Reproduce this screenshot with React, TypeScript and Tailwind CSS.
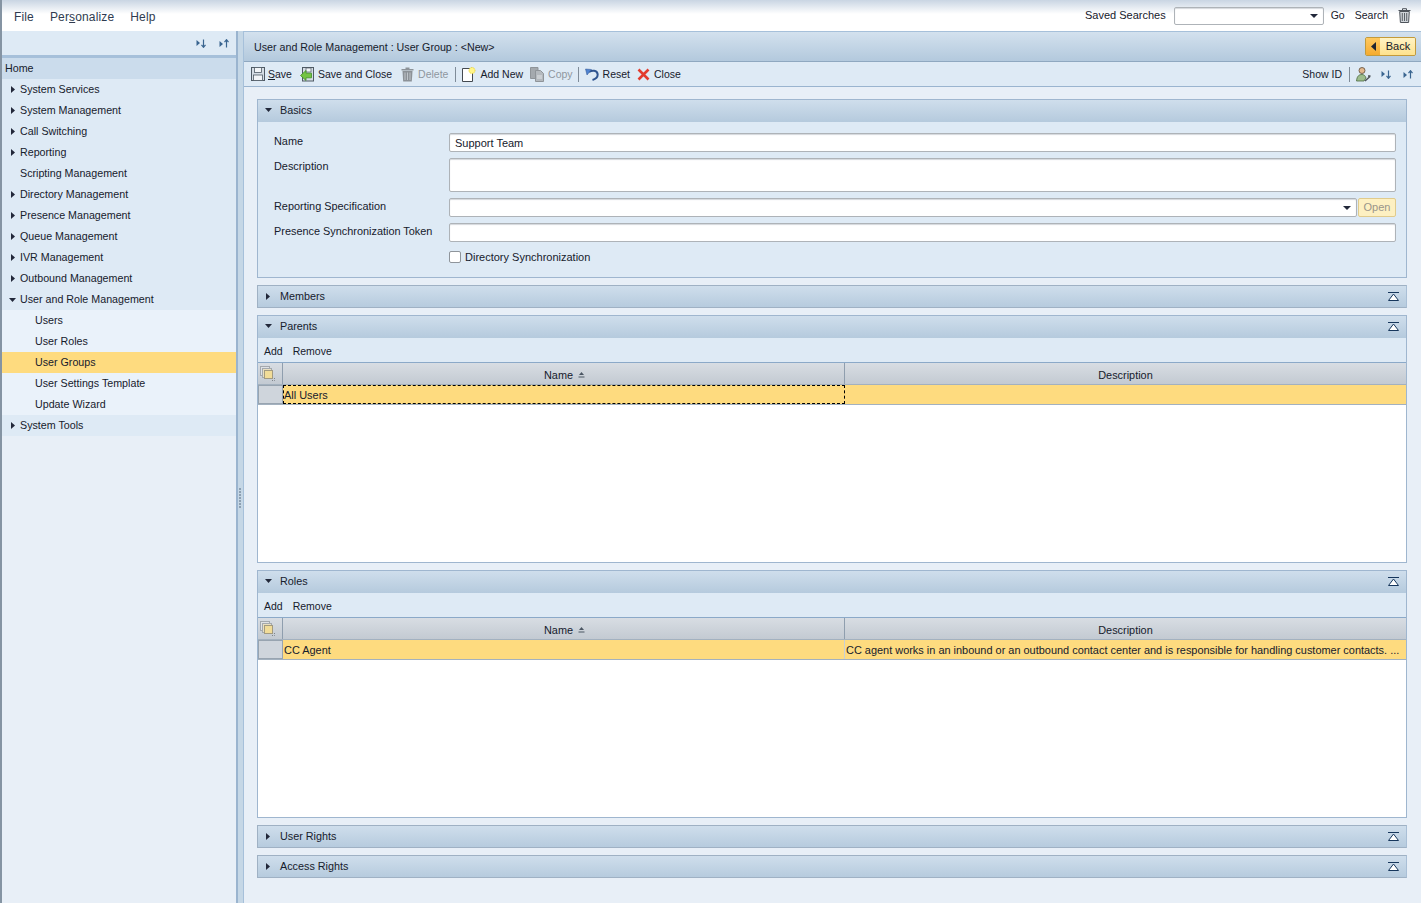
import React from 'react';

const navItems = [
  'System Services',
  'System Management',
  'Call Switching',
  'Reporting',
  'Scripting Management',
  'Directory Management',
  'Presence Management',
  'Queue Management',
  'IVR Management',
  'Outbound Management',
];
const childItems = ['Users', 'User Roles', 'User Groups', 'User Settings Template', 'Update Wizard'];

const ArrowRight = ({ className = '' }: { className?: string }) => (
  <svg width="4" height="7" viewBox="0 0 4 7" className={className}>
    <path d="M0 0 L4 3.5 L0 7 Z" fill="#22283a" />
  </svg>
);

const ArrowDown = ({ className = '', w = 7 }: { className?: string; w?: number }) => (
  <svg width={w} height="4" viewBox="0 0 7 4" preserveAspectRatio="none" className={className}>
    <path d="M0 0 H7 L3.5 4 Z" fill="#22283a" />
  </svg>
);

const ExpandIcon = () => (
  <svg width="10" height="9" viewBox="0 0 10 9">
    <path d="M0.5 1 L4 4 L0.5 7 Z" fill="#3a6590" />
    <path d="M7.5 0.5 V8 M5.5 5.8 L7.5 8.3 L9.5 5.8" stroke="#3a6590" strokeWidth="1.2" fill="none" />
  </svg>
);

const CollapseIcon = () => (
  <svg width="10" height="9" viewBox="0 0 10 9">
    <path d="M0.5 2 L4 5 L0.5 8 Z" fill="#3a6590" />
    <path d="M7.5 8.5 V1 M5.5 3.2 L7.5 0.7 L9.5 3.2" stroke="#3a6590" strokeWidth="1.2" fill="none" />
  </svg>
);

const TrashIcon = () => (
  <svg width="13" height="15" viewBox="0 0 13 15">
    <path d="M0.5 2 H12.5 V3.6 H0.5 Z M4.5 0.5 H8.5 V2 H4.5 Z" fill="#8c9298" />
    <path d="M1.5 4 H11.5 L10.8 14.5 H2.2 Z" fill="#8c9298" />
    <path d="M4 5.5 V13 M6.5 5.5 V13 M9 5.5 V13" stroke="#c5cbd0" strokeWidth="0.9" />
  </svg>
);

const TrashOutlineIcon = () => (
  <svg width="13" height="15" viewBox="0 0 13 15">
    <path d="M0.5 2.5 H12.5 M4.5 2.5 V0.7 H8.5 V2.5" stroke="#4d535a" fill="none" />
    <path d="M1.7 3.5 H11.3 L10.6 14.5 H2.4 Z" fill="#cfd4d9" stroke="#4d535a" />
    <path d="M4.3 5 V13 M6.5 5 V13 M8.7 5 V13" stroke="#4d535a" strokeWidth="0.9" />
  </svg>
);

const SaveIcon = () => (
  <svg width="14" height="14" viewBox="0 0 14 14">
    <rect x="0.5" y="0.5" width="13" height="13" fill="#d5dde5" stroke="#4f5a65" />
    <rect x="3.5" y="0.5" width="7" height="5" fill="#f2f5f8" stroke="#4f5a65" strokeWidth="0.8" />
    <rect x="2.5" y="8" width="9" height="5.5" fill="#f2f5f8" stroke="#4f5a65" strokeWidth="0.8" />
  </svg>
);

const SaveCloseIcon = () => (
  <svg width="14" height="15" viewBox="0 0 14 15">
    <rect x="2.5" y="0.5" width="11" height="13.5" fill="#d5dde5" stroke="#4f5a65" />
    <rect x="6" y="1" width="5" height="4" fill="#f2f5f8" stroke="#4f5a65" strokeWidth="0.7" />
    <path d="M0.5 8.5 L6 3.5 V6.2 H11.5 V10.8 H6 V13.5 Z" fill="#74c442" stroke="#3f8f24" strokeWidth="0.8" />
  </svg>
);

const AddNewIcon = () => (
  <svg width="14" height="15" viewBox="0 0 14 15">
    <path d="M0.5 1.5 H8 M0.5 1.5 V14.5 H10.5 V6" fill="#ffffff" stroke="#444a51" />
    <path d="M1 2 H9 V6 H10 V14 H1 Z" fill="#ffffff" />
    <circle cx="10" cy="3.5" r="3" fill="#fff58a" stroke="#e4c81e" strokeWidth="0.9" strokeDasharray="1 0.8" />
  </svg>
);

const CopyIcon = () => (
  <svg width="14" height="15" viewBox="0 0 14 15">
    <path d="M0.5 0.5 H8 V11.5 H0.5 Z" fill="#a4a9ae" stroke="#8f9499" />
    <path d="M5.5 3.5 H10.5 L13.5 6.5 V14.5 H5.5 Z" fill="#b4b9be" stroke="#8f9499" />
    <path d="M7 9 H12 M7 11 H12" stroke="#eceef0" strokeWidth="0.8" />
  </svg>
);

const ResetIcon = () => (
  <svg width="14" height="13" viewBox="0 0 14 13">
    <path d="M4 4 C7 2 12 2 12.6 6 C13 9 11 11 7.5 12" stroke="#2f548f" strokeWidth="2" fill="none" />
    <path d="M0.5 1 L6.5 1.5 L2 7 Z" fill="#4f83d1" stroke="#2e528f" strokeWidth="0.5" />
  </svg>
);

const CloseIcon = () => (
  <svg width="13" height="13" viewBox="0 0 13 13">
    <path d="M1.5 1.5 L11.5 11.5 M11.5 1.5 L1.5 11.5" stroke="#e23b2e" strokeWidth="2.6" />
  </svg>
);

const UserToolIcon = () => (
  <svg width="15" height="15" viewBox="0 0 15 15">
    <circle cx="6" cy="3.5" r="3" fill="#e3b98f" stroke="#5e4a36" strokeWidth="0.8" />
    <path d="M0.5 14 C1 9 3 7.5 6 7.5 C8 7.5 9.5 9 10 11 L8 14 Z" fill="#9dbd8e" stroke="#4b6b40" strokeWidth="0.8" />
    <path d="M9 14 L14 9.5 M12 9 L14.5 9" stroke="#4d535a" strokeWidth="1.4" />
  </svg>
);

const PanelCollapse = () => (
  <svg width="11" height="9" viewBox="0 0 11 9">
    <path d="M0 0.5 H11" stroke="#16365c" />
    <path d="M5.5 2 L10.5 8.5 H0.5 Z" fill="#ffffff" stroke="#16365c" />
  </svg>
);

const GridCornerIcon = () => (
  <svg width="15" height="15" viewBox="0 0 15 15">
    <rect x="0.5" y="0.5" width="9" height="9" fill="#dfe2e6" stroke="#a4a9ae" />
    <rect x="2.5" y="2.5" width="9" height="9" fill="#e9dfc0" stroke="#a4a9ae" />
    <rect x="4.5" y="4.5" width="8" height="8" fill="#f1dc98" stroke="#a29a80" />
    <path d="M12 14.5 H14.5 V12" stroke="#7f858b" strokeDasharray="1 1" fill="none" />
  </svg>
);

const ToolButton = ({
  icon,
  label,
  disabled,
  tight,
  className = '',
}: {
  icon: React.ReactNode;
  label: React.ReactNode;
  disabled?: boolean;
  tight?: boolean;
  className?: string;
}) => (
  <div className={`flex items-center ${disabled ? 'text-[#8f979f]' : 'text-[#16202c]'} ${className}`}>
    {icon}
    <span className={tight ? 'ml-[3px]' : 'ml-[4px]'}>{label}</span>
  </div>
);

const Divider = ({ className = '' }: { className?: string }) => <div className={`w-px h-[15px] bg-[#7f8c99] ${className}`} />;

const SectionHeader = ({ title, open, collapse = true }: { title: string; open?: boolean; collapse?: boolean }) => (
  <div className="h-[22px] shrink-0 flex items-center pl-[7px] pr-[7px] pb-[2px] bg-gradient-to-b from-[#cfdeec] to-[#b5cadd] text-[10.8px] text-[#16202c]">
    <div className="w-[15px] flex items-center justify-start">{open ? <ArrowDown /> : <ArrowRight className="ml-px" />}</div>
    <span>{title}</span>
    {collapse && (
      <div className="ml-auto flex">
        <PanelCollapse />
      </div>
    )}
  </div>
);

const Collapsed = ({ title }: { title: string }) => (
  <div className="border border-[#9fb1c4] border-r-[#a9bfd6] h-[23px] shrink-0 overflow-hidden">
    <SectionHeader title={title} />
  </div>
);

const GridPanel = ({ title, rowName, rowDesc, focused }: { title: string; rowName: string; rowDesc: string; focused?: boolean }) => (
  <div className="border border-[#9fb6cf] h-[248px] shrink-0 flex flex-col bg-white">
    <SectionHeader title={title} open />
    <div className="h-[25px] shrink-0 bg-[#deeaf5] flex items-center gap-[10px] pl-[6px] pt-[2px] border-b border-[#8ba9c8] text-[10.5px] text-[#16202c]">
      <span>Add</span>
      <span>Remove</span>
    </div>
    <div className="h-[22px] shrink-0 flex bg-gradient-to-b from-[#d8dde3] to-[#c3cad2] border-b border-[#a3b1bf] text-[10.9px] text-[#16202c]">
      <div className="w-[25px] shrink-0 border-r border-[#8f9eae] flex items-center pl-[2px]">
        <GridCornerIcon />
      </div>
      <div className="w-[562px] shrink-0 border-r border-[#8f9eae] flex items-center justify-center gap-[5px] pt-[3px] pl-[2px]">
        <span>Name</span>
        <svg width="7" height="6" viewBox="0 0 7 6">
          <path d="M3.5 0 L6 3 H1 Z" fill="#4b5663" />
          <path d="M0.5 5 H6.5" stroke="#4b5663" />
        </svg>
      </div>
      <div className="flex-1 flex items-center justify-center pt-[3px]">Description</div>
    </div>
    <div className="h-[20px] shrink-0 flex bg-[#fedb7f] border-b border-[#a3b1bf] text-[10.95px] text-[#16202c]">
      <div className="w-[25px] shrink-0 bg-[#cfd5dc] border border-[#98a4b0]" />
      <div className={`w-[562px] shrink-0 flex items-center pt-px ${focused ? 'border border-dashed border-black' : 'pl-px border-r border-[#c9cfd6]'}`}>
        {rowName}
      </div>
      <div className="flex-1 min-w-0 flex items-center pl-px pt-px whitespace-nowrap overflow-hidden">{rowDesc}</div>
    </div>
    <div className="flex-1 bg-white" />
  </div>
);

const FormLabel = ({ children, className = '' }: { children: React.ReactNode; className?: string }) => (
  <div className={`w-[175px] shrink-0 text-[10.9px] text-[#16202c] ${className}`}>{children}</div>
);

const inputClass = 'border border-[#aeb3b8] rounded-[2px] bg-white shadow-[inset_0_1px_1px_#d4d8dc]';

export default function App() {
  return (
    <div className="w-[1421px] h-[903px] overflow-hidden flex flex-col border-l-2 border-[#8594a3] bg-[#e8eff7] text-[11px] leading-[13px] text-[#16202c] font-['Liberation_Sans',Arial,sans-serif]">
      {/* top menu */}
      <div className="h-[31px] shrink-0 flex items-center pl-[12px] pr-[10px] bg-gradient-to-b from-[#c9d5e3] to-[#ffffff] bg-[length:100%_14px] bg-no-repeat bg-white">
        <div className="flex gap-[16px] text-[12px] tracking-[0.15px] text-[#2f3b50] pt-[3px]">
          <span>File</span>
          <span>
            Per<span className="underline">s</span>onalize
          </span>
          <span>Help</span>
        </div>
        <div className="ml-auto flex items-center">
          <span className="mr-[8px]">Saved Searches</span>
          <div className={`w-[150px] h-[18px] flex items-center justify-end pr-[5px] mr-[7px] ${inputClass}`}>
            <ArrowDown w={8} />
          </div>
          <span className="mr-[10px] text-[10.5px]">Go</span>
          <span className="mr-[10px] text-[10.5px]">Search</span>
          <TrashOutlineIcon />
        </div>
      </div>

      <div className="flex-1 flex min-h-0">
        {/* sidebar */}
        <div className="w-[236px] shrink-0 flex flex-col bg-[#e8eff7] border-r-2 border-[#9ab4cf] text-[10.7px]">
          <div className="h-[24px] shrink-0 flex items-center justify-end gap-[13px] pr-[7px] bg-[#deeaf5]">
            <ExpandIcon />
            <CollapseIcon />
          </div>
          <div className="h-[3px] shrink-0 bg-[#a6c0da]" />
          <div className="h-[21px] shrink-0 flex items-center pl-[3px] bg-[#cbdcec]">Home</div>
          {navItems.map((item, i) => (
            <div key={item} className="h-[21px] shrink-0 flex items-center bg-[#deeaf5]">
              <div className="w-[18px] flex justify-end pr-[5px]">{i !== 4 && <ArrowRight />}</div>
              <span>{item}</span>
            </div>
          ))}
          <div className="h-[21px] shrink-0 flex items-center bg-[#deeaf5]">
            <div className="w-[18px] flex justify-end pr-[4px]">
              <ArrowDown />
            </div>
            <span>User and Role Management</span>
          </div>
          {childItems.map((item) => (
            <div key={item} className={`h-[21px] shrink-0 flex items-center pl-[33px] ${item === 'User Groups' ? 'bg-[#fedb7f]' : 'bg-[#eaf2fa]'}`}>
              {item}
            </div>
          ))}
          <div className="h-[21px] shrink-0 flex items-center bg-[#deeaf5]">
            <div className="w-[18px] flex justify-end pr-[5px]">
              <ArrowRight />
            </div>
            <span>System Tools</span>
          </div>
        </div>

        {/* splitter */}
        <div className="w-[6px] shrink-0 bg-[#c5d7e6] border-r border-[#a6c0da] flex items-center justify-center">
          <div className="flex flex-col gap-px mt-[62px] mr-[2px]">
            {[0, 1, 2, 3, 4, 5, 6].map((d) => (
              <div key={d} className="w-[2px] h-[2px] bg-[#8da0b2]" />
            ))}
          </div>
        </div>

        {/* main */}
        <div className="flex-1 min-w-0 flex flex-col">
          <div className="h-[31px] shrink-0 flex items-center pl-[10px] pr-[5px] bg-gradient-to-b from-[#d3e1ee] to-[#b3c9dd] border-t border-[#a6c0da] border-b border-b-[#8fa8c0]">
            <span className="text-[10.7px] pt-px">User and Role Management : User Group : &lt;New&gt;</span>
            <div className="ml-auto w-[51px] h-[19px] flex rounded-[2px] border border-[#c39a3b] overflow-hidden">
              <div className="w-[14px] flex items-center justify-center bg-gradient-to-b from-[#ffc95e] to-[#f5ab2e]">
                <svg width="5" height="9" viewBox="0 0 5 9">
                  <path d="M5 0 L0 4.5 L5 9 Z" fill="#1f2430" />
                </svg>
              </div>
              <div className="flex-1 flex items-center justify-center pl-px bg-gradient-to-b from-[#fff3c4] to-[#fee28d]">Back</div>
            </div>
          </div>
          <div className="h-[25px] shrink-0 flex items-center pl-[7px] pr-[8px] bg-[#deeaf5] border-b border-[#9ab4cf] text-[10.5px]">
            <ToolButton
              tight
              icon={<SaveIcon />}
              label={
                <>
                  <span className="underline">S</span>ave
                </>
              }
            />
            <ToolButton icon={<SaveCloseIcon />} label="Save and Close" className="ml-[8px]" />
            <ToolButton icon={<TrashIcon />} label="Delete" disabled className="ml-[9px]" />
            <Divider className="ml-[7px]" />
            <ToolButton icon={<AddNewIcon />} label="Add New" className="ml-[6px]" />
            <ToolButton icon={<CopyIcon />} label="Copy" disabled className="ml-[7px]" />
            <Divider className="ml-[5px]" />
            <ToolButton icon={<ResetIcon />} label="Reset" className="ml-[6px]" />
            <ToolButton icon={<CloseIcon />} label="Close" className="ml-[7px]" />
            <div className="ml-auto flex items-center">
              <span>Show ID</span>
              <Divider className="ml-[7px]" />
              <div className="ml-[6px] flex">
                <UserToolIcon />
              </div>
              <div className="ml-[10px] flex">
                <ExpandIcon />
              </div>
              <div className="ml-[12px] flex">
                <CollapseIcon />
              </div>
            </div>
          </div>

          <div className="flex-1 min-h-0 flex flex-col gap-[7px] pl-[13px] pr-[14px] pt-[12px]">
            {/* basics */}
            <div className="border border-[#9fb6cf] h-[179px] shrink-0 flex flex-col bg-[#deeaf5]">
              <SectionHeader title="Basics" open collapse={false} />
              <div className="flex-1 flex flex-col pl-[16px] pr-[10px] pt-[11px]">
                <div className="flex items-center h-[19px] mb-[6px]">
                  <FormLabel className="pb-[3px]">Name</FormLabel>
                  <div className={`flex-1 h-[19px] flex items-center pl-[5px] pt-px ${inputClass}`}>Support Team</div>
                </div>
                <div className="flex h-[34px] mb-[6px]">
                  <FormLabel>
                    <div className="pt-[2px]">Description</div>
                  </FormLabel>
                  <div className={`flex-1 ${inputClass}`} />
                </div>
                <div className="flex items-center h-[19px] mb-[6px]">
                  <FormLabel className="pb-[3px]">Reporting Specification</FormLabel>
                  <div className={`flex-1 h-[19px] flex items-center justify-end pr-[5px] ${inputClass}`}>
                    <ArrowDown w={8} />
                  </div>
                  <div className="w-[38px] h-[19px] ml-px rounded-[2px] border border-[#e0cb8c] bg-[#fdf0c2] text-[#9a958a] flex items-center justify-center">
                    Open
                  </div>
                </div>
                <div className="flex items-center h-[19px] mb-[8px]">
                  <FormLabel className="pb-[3px]">Presence Synchronization Token</FormLabel>
                  <div className={`flex-1 h-[19px] ${inputClass}`} />
                </div>
                <div className="flex items-center h-[13px] pl-[175px]">
                  <div className="w-[12px] h-[12px] rounded-[2px] border border-[#8f959b] bg-white mr-[4px]" />
                  <span className="pt-[2px]">Directory Synchronization</span>
                </div>
              </div>
            </div>

            <Collapsed title="Members" />
            <GridPanel title="Parents" rowName="All Users" rowDesc="" focused />
            <GridPanel
              title="Roles"
              rowName="CC Agent"
              rowDesc="CC agent works in an inbound or an outbound contact center and is responsible for handling customer contacts. ..."
            />
            <Collapsed title="User Rights" />
            <Collapsed title="Access Rights" />
          </div>
        </div>
      </div>
    </div>
  );
}
